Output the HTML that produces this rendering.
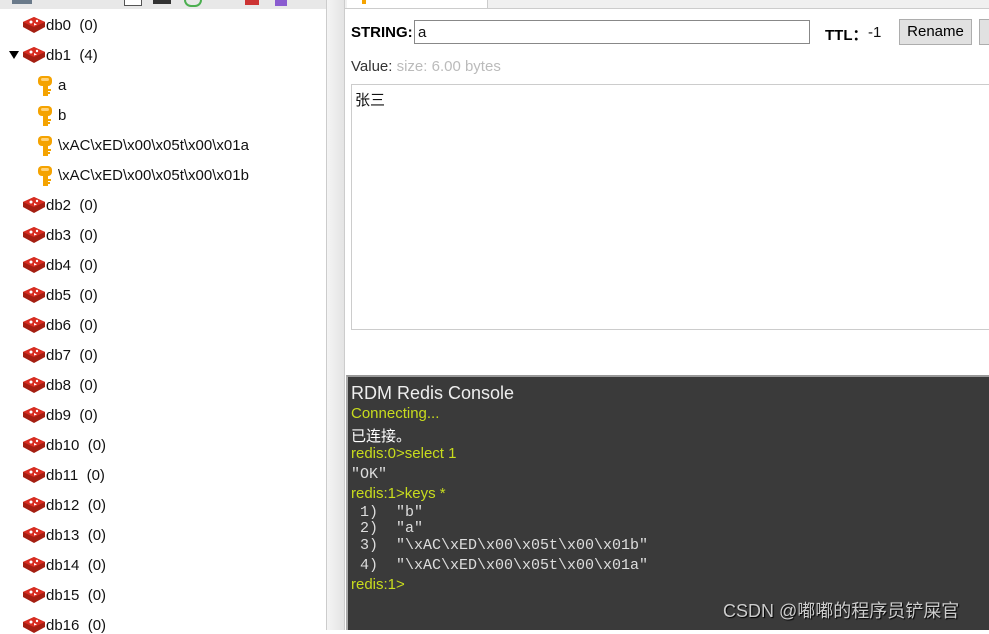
<!DOCTYPE html>
<html><head><meta charset="utf-8"><style>
body{margin:0;width:989px;height:630px;overflow:hidden;background:#fff;position:relative;font-family:"Liberation Sans","Noto Sans CJK SC",sans-serif;}
.a{position:absolute;white-space:pre;}
.t{font-size:14px;color:#111;}
.tr{font-size:15px;color:#111;}
.m{font-family:"Liberation Mono","Noto Sans CJK SC",monospace;font-size:15px;color:#ddd;}
.y{color:#c8dc1e;font-size:15px;}
</style></head><body>
<div class="a" style="left:0;top:0;width:326px;height:9px;background:#e8e8e8"></div>
<div class="a" style="left:12px;top:0;width:20px;height:4px;background:#6a7a8a"></div>
<div class="a" style="left:124px;top:0;width:16px;height:5px;border:1px solid #555;border-top:none;background:#fff"></div>
<div class="a" style="left:153px;top:0;width:18px;height:4px;background:#333"></div>
<div class="a" style="left:184px;top:0;width:14px;height:5px;border:2px solid #4caf50;border-top:none;border-radius:0 0 8px 8px"></div>
<div class="a" style="left:245px;top:0;width:14px;height:5px;background:#c33"></div>
<div class="a" style="left:275px;top:0;width:12px;height:6px;background:#8a5cd0"></div>
<div class="a" style="left:326px;top:0;width:19px;height:630px;background:linear-gradient(90deg,#f4f4f4,#e4e4e4);border-left:1px solid #ccc;border-right:1px solid #ccc;box-sizing:border-box"></div>
<div class="a" style="left:345px;top:0;width:644px;height:8px;background:#f0f0f0;border-bottom:1px solid #ccc"></div>
<div class="a" style="left:347px;top:0;width:140px;height:8px;background:#fff;border-right:1px solid #ccc"></div>
<div class="a" style="left:362px;top:0;width:4px;height:4px;background:#f5a300"></div>

<div id="tree"></div>
<script>
var rows=[["db0  (0)",25,0],["db1  (4)",55,0],["a",85,1],["b",115,1],["\\xAC\\xED\\x00\\x05t\\x00\\x01a",145,1],["\\xAC\\xED\\x00\\x05t\\x00\\x01b",175,1]];
for(var i=2;i<=16;i++)rows.push(["db"+i+"  (0)",205+(i-2)*30,0]);
var h="";
rows.forEach(function(r){
 if(r[2]){h+='<svg class="a" style="left:37px;top:'+(r[1]-10)+'px" width="16" height="22" viewBox="0 0 16 22"><rect x="1" y="1" width="14" height="10" rx="4" fill="#f5a300"/><rect x="4" y="3" width="8" height="3" rx="1.5" fill="#ffd27a"/><rect x="6" y="10" width="5" height="11" fill="#f5a300"/><rect x="11" y="14" width="3" height="2" fill="#f5a300"/><rect x="11" y="17" width="2" height="2" fill="#f5a300"/></svg>';
 h+='<div class="a tr" style="left:58px;top:'+(r[1]-8)+'px">'+r[0]+'</div>';}
 else{h+='<svg class="a" style="left:22px;top:'+(r[1]-9)+'px" width="24" height="18" viewBox="0 0 24 18"><path d="M12 1L23 6V11L12 17L1 11V6Z" fill="#a41e11"/><path d="M12 1L23 6L12 11L1 6Z" fill="#d82c20"/><circle cx="9" cy="6" r="1.5" fill="#fff"/><circle cx="15" cy="5" r="1.2" fill="#fff"/><path d="M12 7l3 1.5-3 1z" fill="#fff"/></svg>';
 h+='<div class="a tr" style="left:46px;top:'+(r[1]-8)+'px">'+r[0]+'</div>';}
});
h+='<div class="a" style="left:9px;top:51px;width:0;height:0;border-left:5px solid transparent;border-right:5px solid transparent;border-top:8px solid #000"></div>';
document.getElementById("tree").innerHTML=h;
</script>

<div class="a" style="left:351px;top:24px;font-weight:bold;font-size:15px">STRING:</div>
<div class="a" style="left:414px;top:20px;width:396px;height:24px;border:1px solid #888;box-sizing:border-box"></div>
<div class="a tr" style="left:418px;top:24px">a</div>
<div class="a" style="left:825px;top:24px;font-weight:bold;font-size:15px">TTL：</div>
<div class="a tr" style="left:868px;top:24px">-1</div>
<div class="a" style="left:899px;top:19px;width:73px;height:26px;background:#e1e1e1;border:1px solid #adadad;box-sizing:border-box;font-size:15px;text-align:center;line-height:24px">Rename</div>
<div class="a" style="left:979px;top:19px;width:12px;height:26px;background:#e1e1e1;border:1px solid #adadad;box-sizing:border-box"></div>
<div class="a tr" style="left:351px;top:58px;color:#333">Value: <span style="color:#bbb">size: 6.00 bytes</span></div>
<div class="a" style="left:351px;top:84px;width:640px;height:246px;border:1px solid #ccc;box-sizing:border-box"></div>
<div class="a tr" style="left:355px;top:89px">张三</div>

<div class="a" style="left:346px;top:375px;width:643px;height:255px;background:#3a3a3a;border-top:2px solid #999;border-left:2px solid #aaa;box-sizing:border-box"></div>
<div class="a" style="left:351px;top:383px;font-size:18px;color:#eee">RDM Redis Console</div>
<div class="a y" style="left:351px;top:405px">Connecting...</div>
<div class="a" style="left:351px;top:425px;font-size:15px;color:#fff">已连接。</div>
<div class="a y" style="left:351px;top:445px">redis:0&gt;select 1</div>
<div class="a m" style="left:351px;top:466px">"OK"</div>
<div class="a y" style="left:351px;top:485px">redis:1&gt;keys *</div>
<div class="a m" style="left:351px;top:504px"> 1)  "b"</div>
<div class="a m" style="left:351px;top:520px"> 2)  "a"</div>
<div class="a m" style="left:351px;top:537px"> 3)  "\xAC\xED\x00\x05t\x00\x01b"</div>
<div class="a m" style="left:351px;top:557px"> 4)  "\xAC\xED\x00\x05t\x00\x01a"</div>
<div class="a y" style="left:351px;top:576px">redis:1&gt;</div>
<div class="a" style="left:723px;top:597px;font-size:18px;color:#ccc;text-shadow:1px 1px 1px #000">CSDN @嘟嘟的程序员铲屎官</div>
</body></html>
